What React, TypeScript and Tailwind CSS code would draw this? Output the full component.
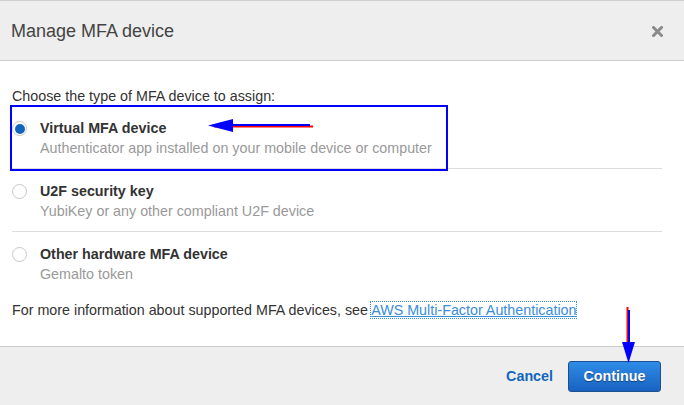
import React from "react";

interface MfaOption {
  id: string;
  title: string;
  description: string;
}

const options: MfaOption[] = [
  {
    id: "virtual",
    title: "Virtual MFA device",
    description: "Authenticator app installed on your mobile device or computer",
  },
  {
    id: "u2f",
    title: "U2F security key",
    description: "YubiKey or any other compliant U2F device",
  },
  {
    id: "hardware",
    title: "Other hardware MFA device",
    description: "Gemalto token",
  },
];

function Radio({ checked }: { checked: boolean }) {
  return (
    <span className="mt-[3px] flex h-[15px] w-[15px] shrink-0 items-center justify-center rounded-full border border-[#c8c8c8] bg-white">
      {checked && <span className="h-[10px] w-[10px] rounded-full bg-[#1166bb]" />}
    </span>
  );
}

export default function App() {
  const selected = "virtual";

  return (
    <div className="relative h-[405px] w-[684px] overflow-hidden bg-white font-['Liberation_Sans',Arial,sans-serif] text-[#333]">
      {/* ── Header ── */}
      <div className="flex h-[61px] items-center justify-between border-y border-[#cfcfcf] bg-[#eeeeee] pl-[11px] pr-[21px]">
        <h2 className="text-[18px] leading-none text-[#444]">Manage MFA device</h2>
        <svg width="11" height="11" viewBox="0 0 11 11" className="mt-px">
          <path d="M1.5 1.5l8 8M9.5 1.5l-8 8" stroke="#8a8a8a" strokeWidth="3" strokeLinecap="square" />
        </svg>
      </div>

      {/* ── Body ── */}
      <div className="h-[285px] pl-3 pr-[22px] pt-[25px] text-[14.3px]">
        <p className="leading-[20px]">Choose the type of MFA device to assign:</p>
        <div className="flex flex-col">
          {options.map((opt, i) => (
            <label
              key={opt.id}
              className={`flex gap-[13px] pt-[12px] pb-[10px] ${i < options.length - 1 ? "border-b border-[#dddddd]" : ""}`}
            >
              <Radio checked={opt.id === selected} />
              <div className="flex flex-col">
                <span className="font-bold leading-[20px] text-[#333]">{opt.title}</span>
                <span className="leading-[20px] text-[#999]">{opt.description}</span>
              </div>
            </label>
          ))}
        </div>
        <p className="mt-[6px] leading-[20px]">
          For more information about supported MFA devices, see{" "}
          <a href="#" className="text-[#3a8ddb] underline outline-1 outline-dotted outline-[#3a8ddb]">
            AWS Multi-Factor Authentication
          </a>
        </p>
      </div>

      {/* ── Footer ── */}
      <div className="flex h-[59px] items-center justify-end gap-[15px] border-t border-[#cccccc] bg-[#eeeeee] pr-[23px] pt-[2px]">
        <button className="text-[14.3px] font-bold text-[#1166bb]">Cancel</button>
        <button className="-mt-[2px] h-[31px] w-[93px] rounded-[3px] border border-[#1a4f90] bg-gradient-to-b from-[#2f8ce6] to-[#1a62c2] pt-[2px] text-[14.3px] font-bold text-white [text-shadow:0_1px_1px_rgba(0,0,0,0.45)]">
          Continue
        </button>
      </div>

      {/* ── Annotations ── */}
      <div className="pointer-events-none absolute left-[10px] top-[105px] h-[66px] w-[438px] border-2 border-[#0000ff]" />
      <svg className="pointer-events-none absolute left-0 top-0" width="684" height="405">
        <line x1="214" y1="126.5" x2="313" y2="126.5" stroke="#ff0000" strokeWidth="2" />
        <line x1="216" y1="125" x2="310" y2="125" stroke="#0000ff" strokeWidth="2" />
        <polygon points="208,125.5 233,119 233,132" fill="#0000ff" />
        <line x1="627.5" y1="307" x2="627.5" y2="346" stroke="#ff0000" strokeWidth="2" />
        <line x1="629" y1="310" x2="629" y2="346" stroke="#0000ff" strokeWidth="2" />
        <polygon points="628.5,363 622,342 635,342" fill="#0000ff" />
      </svg>
    </div>
  );
}
